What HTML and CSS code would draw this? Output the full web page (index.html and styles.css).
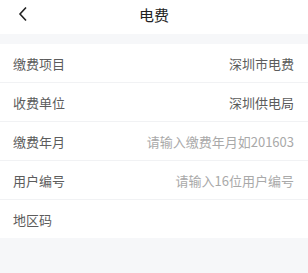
FILE: index.html
```html
<html>
<head>
  <title>电费</title>
  <link rel="stylesheet" href="styles.css">
</head>
<body>
  <div class="nav-bar">
    <span class="nav-back">
      <svg width="10" height="16" viewBox="0 0 10 16"><path d="M8 1.5 L2 8 L8 14.5" fill="none" stroke="#222" stroke-width="1.6"/></svg>
    </span>
    <div class="nav-title">电费</div>
  </div>

  <div class="gap"></div>

  <div class="form">
    <div class="row">
      <span class="label">缴费项目</span>
      <span class="value">深圳市电费</span>
    </div>
    <div class="row">
      <span class="label">收费单位</span>
      <span class="value">深圳供电局</span>
    </div>
    <div class="row">
      <span class="label">缴费年月</span>
      <span class="value placeholder">请输入缴费年月如201603</span>
    </div>
    <div class="row">
      <span class="label">用户编号</span>
      <span class="value placeholder">请输入16位用户编号</span>
    </div>
    <div class="row">
      <span class="label">地区码</span>
      <span class="value"></span>
    </div>
  </div>
</body>
</html>
```

FILE: styles.css
```css
/* page */
body {
  margin: 0;
  background-color: #f6f7f9;
  font-family: "Noto Sans CJK SC", "Noto Sans", sans-serif;
}

/* Nav bar */
.nav-bar {
  position: relative;
  height: 34px;
  background-color: #ffffff;
  display: flex;
  align-items: center;
  justify-content: center;
}
.nav-back {
  position: absolute;
  left: 18px;
  top: 6px;
}
.nav-title {
  font-size: 15px;
  color: #222222;
  margin-top: -6px;
}

.gap {
  height: 10px;
}

/* Form rows */
.form {
  background-color: #ffffff;
}
.row {
  height: 38px;
  padding: 0 14px 0 13px;
  display: flex;
  align-items: center;
  justify-content: space-between;
  border-bottom: 1px solid #f1f2f4;
  font-size: 13px;
}
.row:last-child {
  border-bottom: none;
}
.label {
  color: #5c5c5c;
}
.value {
  color: #5c5c5c;
}
.placeholder {
  color: #a9a9a9;
}
```
